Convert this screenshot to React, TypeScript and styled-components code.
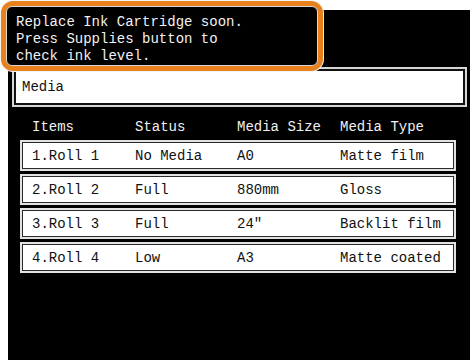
import * as React from "react";
import styled, { createGlobalStyle } from "styled-components";

type Roll = {
    item: string;
    status: string;
    size: string;
    type: string;
};

const rolls: Roll[] = [
    { item: "1.Roll 1", status: "No Media", size: "A0", type: "Matte film" },
    { item: "2.Roll 2", status: "Full", size: "880mm", type: "Gloss" },
    { item: "3.Roll 3", status: "Full", size: "24\"", type: "Backlit film" },
    { item: "4.Roll 4", status: "Low", size: "A3", type: "Matte coated" },
];

const GlobalStyle = createGlobalStyle`
    html, body {
        margin: 0;
        padding: 0;
        background: #ffffff;
        overflow: hidden;
    }
    body {
        font-family: "Liberation Mono", "DejaVu Sans Mono", monospace;
        font-size: 14px;
    }
`;

const Page = styled.div`
    position: relative;
    width: 470px;
    height: 364px;
    padding: 10px 0 0 8px;
    box-sizing: border-box;
`;

const Screen = styled.div`
    width: 462px;
    height: 350px;
    background: #000;
    box-sizing: border-box;
    padding: 57px 3px 0 4px;
    display: flex;
    flex-direction: column;
`;

const Notice = styled.div`
    position: absolute;
    left: 1px;
    top: 1px;
    width: 322px;
    height: 70px;
    box-sizing: border-box;
    border: 5px solid #e8801c;
    border-radius: 12px;
    box-shadow: 0 0 0 1px #f4f4f4;
    background: #e8801c;
`;

const NoticeInner = styled.div`
    height: 100%;
    box-sizing: border-box;
    background: #000;
    border: 1px solid #d8d8d8;
    border-radius: 6px;
    padding: 7px 0 0 9px;
    color: #f2f2f2;
    line-height: 17px;
    white-space: pre;
`;

const MediaBox = styled.div`
    height: 40px;
    box-sizing: border-box;
    background: #fff;
    border: 2px solid #d6d6d6;
    box-shadow: inset 0 0 0 2px #111;
    display: flex;
    align-items: center;
    padding-left: 8px;
    color: #111;
`;

const Table = styled.div`
    display: flex;
    flex-direction: column;
    gap: 3px;
    padding: 0 11px 0 8px;
`;

const Cells = styled.div<{ $head?: boolean }>`
    display: grid;
    grid-template-columns: 103px 102px 103px 1fr;
    align-items: center;
    box-sizing: border-box;
    padding-left: ${p => (p.$head ? "12px" : "10px")};
    height: ${p => (p.$head ? "30px" : "31px")};
    color: ${p => (p.$head ? "#f0f0f0" : "#111")};
    background: ${p => (p.$head ? "transparent" : "#fff")};
    border: ${p => (p.$head ? "none" : "2px solid #e2e2e2")};
    box-shadow: ${p => (p.$head ? "none" : "inset 0 0 0 1px #2a2a2a")};
    padding-top: ${p => (p.$head ? "9px" : "0")};
    white-space: pre;
`;

const Cell = styled.span``;

export default function App() {
    return (
        <Page>
            <GlobalStyle />
            <Screen>
                <MediaBox>Media</MediaBox>
                <Table>
                    <Cells $head>
                        <Cell>Items</Cell>
                        <Cell>Status</Cell>
                        <Cell>Media Size</Cell>
                        <Cell>Media Type</Cell>
                    </Cells>
                    {rolls.map(r => (
                        <Cells key={r.item}>
                            <Cell>{r.item}</Cell>
                            <Cell>{r.status}</Cell>
                            <Cell>{r.size}</Cell>
                            <Cell>{r.type}</Cell>
                        </Cells>
                    ))}
                </Table>
            </Screen>
            <Notice>
                <NoticeInner>
                    {"Replace Ink Cartridge soon.\nPress Supplies button to\ncheck ink level."}
                </NoticeInner>
            </Notice>
        </Page>
    );
}
